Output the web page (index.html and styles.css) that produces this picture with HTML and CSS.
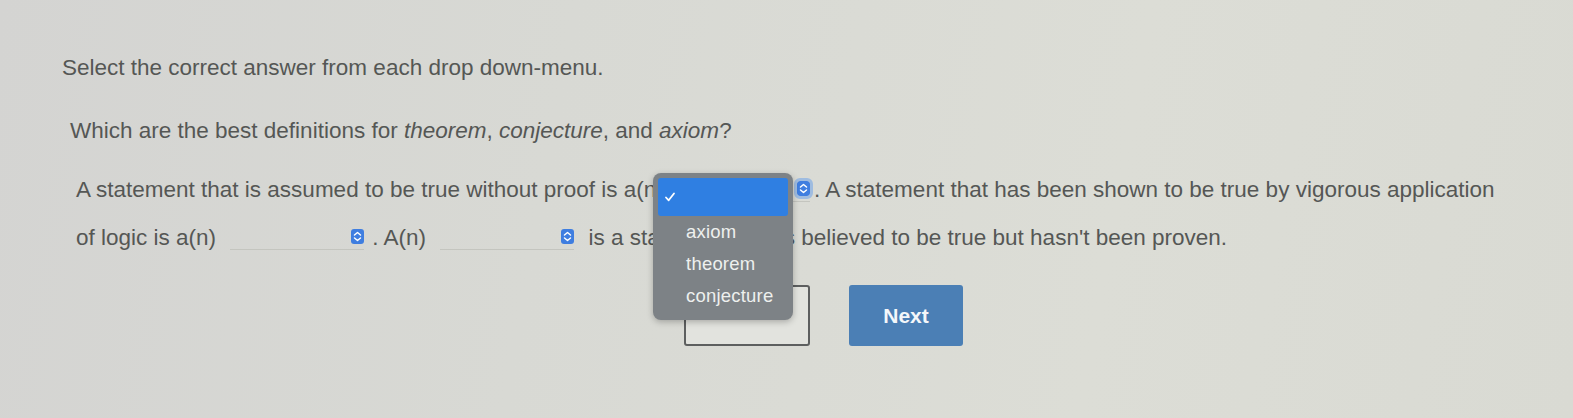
FILE: index.html
```html
<!DOCTYPE html>
<html lang="en">
<head>
<meta charset="utf-8">
<title>Drop down question</title>
<link rel="stylesheet" href="styles.css">
</head>
<body>
<main class="page">
  <p class="instruction">Select the correct answer from each drop down-menu.</p>
  <p class="question">Which are the best definitions for <em>theorem</em>, <em>conjecture</em>, and <em>axiom</em>?</p>
  <p class="passage">A statement that is assumed to be true without proof is a(n) <span class="select open"><span class="arrow focus"><svg viewBox="0 0 13 15" width="13" height="15"><rect width="13" height="15" rx="3" fill="#3f7ee0"/><path d="M3.5 6 L6.5 3.5 L9.5 6 M3.5 9 L6.5 11.5 L9.5 9" stroke="#fff" stroke-width="1.5" fill="none" stroke-linecap="round" stroke-linejoin="round"/></svg></span><span class="menu"><span class="item selected"><svg class="check" viewBox="0 0 12 12" width="12" height="12"><path d="M2 6.5 L4.7 9.3 L10 2.5" stroke="#fff" stroke-width="1.8" fill="none" stroke-linecap="round" stroke-linejoin="round"/></svg></span><span class="item">axiom</span><span class="item">theorem</span><span class="item">conjecture</span></span></span>. A statement that has been shown to be true by vigorous application of logic is a(n) <span class="select"><span class="arrow"><svg viewBox="0 0 13 15" width="13" height="15"><rect width="13" height="15" rx="3" fill="#3f7ee0"/><path d="M3.5 6 L6.5 3.5 L9.5 6 M3.5 9 L6.5 11.5 L9.5 9" stroke="#fff" stroke-width="1.5" fill="none" stroke-linecap="round" stroke-linejoin="round"/></svg></span></span>. A(n) <span class="select"><span class="arrow"><svg viewBox="0 0 13 15" width="13" height="15"><rect width="13" height="15" rx="3" fill="#3f7ee0"/><path d="M3.5 6 L6.5 3.5 L9.5 6 M3.5 9 L6.5 11.5 L9.5 9" stroke="#fff" stroke-width="1.5" fill="none" stroke-linecap="round" stroke-linejoin="round"/></svg></span></span> is a statement that is believed to be true but hasn't been proven.</p>
  <div class="actions">
    <button class="btn reset" type="button">Reset</button>
    <button class="btn next" type="button">Next</button>
  </div>
</main>
</body>
</html>
```
FILE: styles.css
```css
html, body {
  margin: 0;
  padding: 0;
}
body {
  width: 1573px;
  height: 418px;
  overflow: hidden;
  background: linear-gradient(100deg, #d4d4d2 0%, #d8d9d4 35%, #dcddd6 70%, #d9dad3 100%);
  font-family: "Liberation Sans", Arial, sans-serif;
  color: #555755;
}
.page {
  padding: 55px 0 0 62px;
}
.instruction {
  margin: 0;
  font-size: 22.5px;
  line-height: 26px;
}
.question {
  margin: 37px 0 0 8px;
  font-size: 22.5px;
  line-height: 26px;
}
.question em {
  font-style: italic;
}
.passage {
  position: relative;
  margin: 22px 0 0 14px;
  width: 1440px;
  font-size: 22.5px;
  line-height: 48px;
}
.select {
  position: relative;
  display: inline-block;
  vertical-align: middle;
  width: 134px;
  height: 26px;
  margin: -4px 8px 0 8px;
  border-bottom: 1px solid #c4c5bf;
  box-sizing: border-box;
}
.select.open {
  width: 140px;
  margin: -4px 4px 0 0;
}
.arrow {
  position: absolute;
  right: 0;
  top: 5px;
  width: 13px;
  height: 15px;
  line-height: 0;
}
.arrow.focus {
  outline: 3px solid #9fbce0;
  border-radius: 3px;
}
.menu {
  position: absolute;
  left: -17px;
  top: -3px;
  width: 140px;
  height: 147px;
  background: #7d8286;
  border-radius: 8px;
  box-shadow: 0 2px 6px rgba(0,0,0,0.25);
  padding: 5px 5px 8px;
  box-sizing: border-box;
  display: flex;
  flex-direction: column;
  z-index: 5;
}
.item {
  display: flex;
  align-items: center;
  height: 32px;
  flex: none;
  padding-left: 28px;
  font-size: 18.5px;
  line-height: 32px;
  color: #eef0ee;
  letter-spacing: 0.2px;
}
.item.selected {
  height: 38px;
  background: #2f7fe2;
  border-radius: 3px;
  padding-left: 6px;
}
.check {
  display: block;
}
.actions {
  display: flex;
  gap: 39px;
  margin: 23px 0 0 622px;
}
.btn {
  font-family: "Liberation Sans", Arial, sans-serif;
  font-size: 21px;
  border-radius: 3px;
  height: 61px;
  cursor: pointer;
}
.reset {
  width: 126px;
  background: #e2e3de;
  border: 2px solid #5d5f5f;
  color: #555;
  padding-bottom: 8px;
}
.next {
  width: 114px;
  background: #4b7fb5;
  border: none;
  color: #f4f7fa;
  font-weight: bold;
}
```
